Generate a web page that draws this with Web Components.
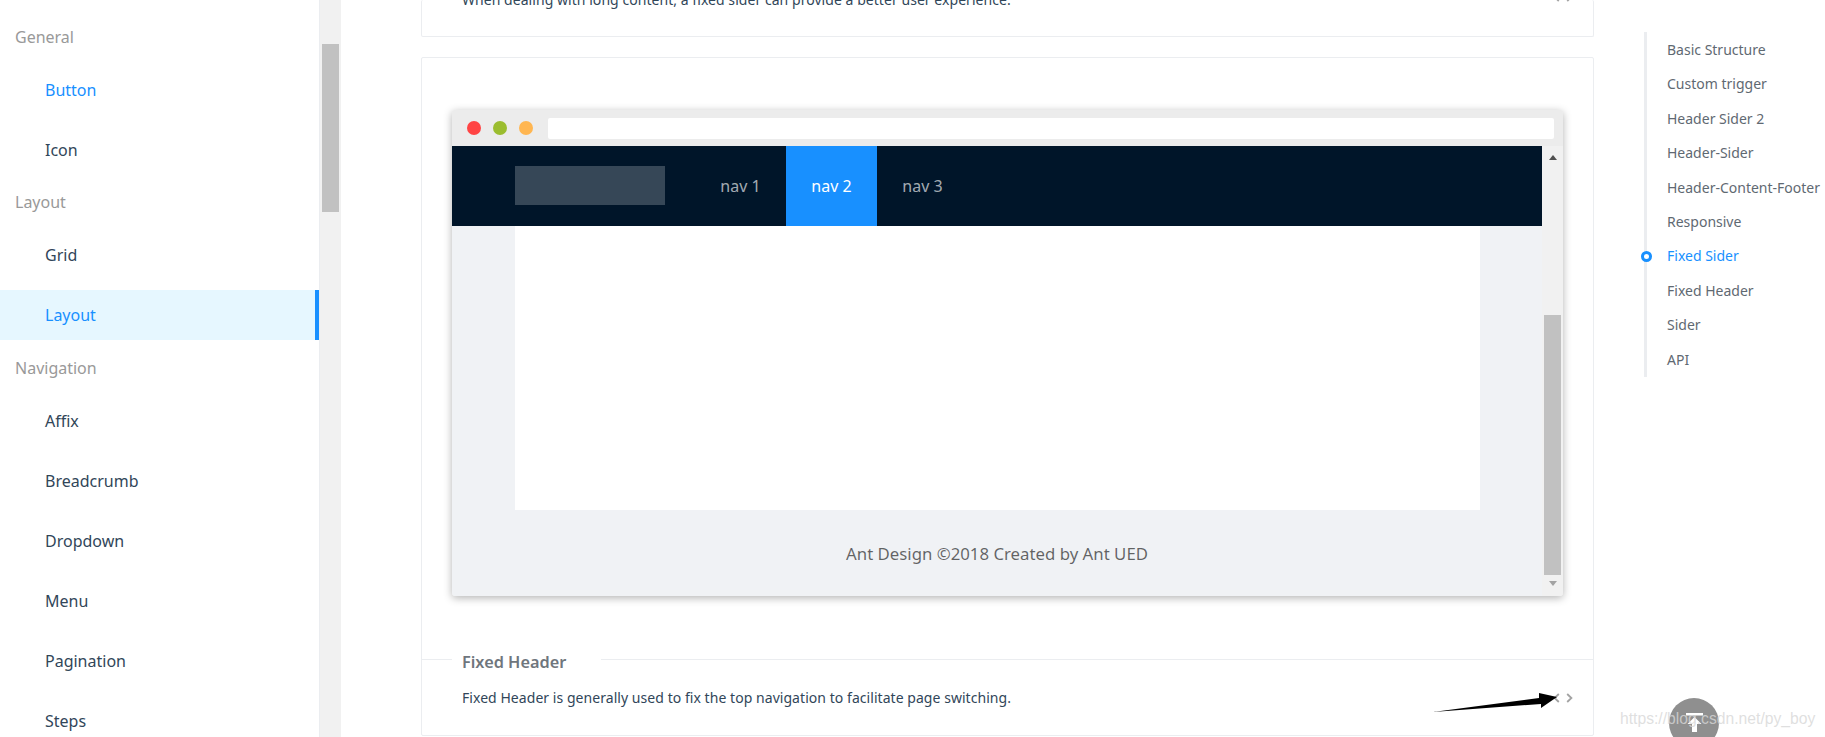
<!DOCTYPE html>
<html>
<head>
<meta charset="utf-8">
<title>Ant Design Layout</title>
<style>
html, body { margin: 0; height: 737px; overflow: hidden; background: #fff; }
body { font-family: "Noto Sans", "Liberation Sans", sans-serif; }
</style>
</head>
<body>
<app-page>
  <side-menu slot="sider">
    <menu-group title="General">
      <menu-item active-text>Button</menu-item>
      <menu-item>Icon</menu-item>
    </menu-group>
    <menu-group title="Layout">
      <menu-item>Grid</menu-item>
      <menu-item selected>Layout</menu-item>
    </menu-group>
    <menu-group title="Navigation" style="padding-top: 1px">
      <menu-item>Affix</menu-item>
      <menu-item>Breadcrumb</menu-item>
      <menu-item>Dropdown</menu-item>
      <menu-item>Menu</menu-item>
      <menu-item>Pagination</menu-item>
      <menu-item>Steps</menu-item>
    </menu-group>
  </side-menu>

  <demo-list slot="main">
    <demo-card clipped description="When dealing with long content, a fixed sider can provide a better user experience."></demo-card>
    <demo-card heading="Fixed Header" description="Fixed Header is generally used to fix the top navigation to facilitate page switching.">
      <browser-frame slot="preview">
        <demo-layout></demo-layout>
      </browser-frame>
    </demo-card>
  </demo-list>

  <anchor-nav slot="anchor">
    <anchor-link>Basic Structure</anchor-link>
    <anchor-link>Custom trigger</anchor-link>
    <anchor-link>Header Sider 2</anchor-link>
    <anchor-link>Header-Sider</anchor-link>
    <anchor-link>Header-Content-Footer</anchor-link>
    <anchor-link>Responsive</anchor-link>
    <anchor-link active>Fixed Sider</anchor-link>
    <anchor-link>Fixed Header</anchor-link>
    <anchor-link>Sider</anchor-link>
    <anchor-link>API</anchor-link>
  </anchor-nav>

  <page-overlays slot="overlay"></page-overlays>
</app-page>

<script>
class AppPage extends HTMLElement {
    constructor() {
        super();
        this.attachShadow({mode: 'open'}).innerHTML = `
        <style>
          :host { display: flex; width: 1825px; height: 737px; overflow: hidden; position: relative; }
        </style>
        <slot name="sider"></slot>
        <slot name="main"></slot>
        <slot name="anchor"></slot>
        <slot name="overlay"></slot>`;
    }
}

class SideMenu extends HTMLElement {
    constructor() {
        super();
        this.attachShadow({mode: 'open'}).innerHTML = `
        <style>
          :host { display: flex; flex: none; width: 341px; height: 737px; }
          .list { flex: none; width: 319px; padding-top: 20px; border-right: 1px solid #ebedf0; overflow: hidden; }
          .bar { flex: 1; background: #f1f1f1; padding-top: 44px; display: flex; justify-content: center; }
          .thumb { width: 17px; height: 168px; background: #c1c1c1; }
        </style>
        <div class="list"><slot></slot></div>
        <div class="bar"><div class="thumb"></div></div>`;
    }
}

class MenuGroup extends HTMLElement {
    constructor() {
        super();
        this.attachShadow({mode: 'open'}).innerHTML = `
        <style>
          :host { display: block; }
          .title { height: 35px; line-height: 35px; padding-left: 15px; font-size: 16px; color: #999; }
        </style>
        <div class="title"></div>
        <slot></slot>`;
    }
    connectedCallback() {
        this.shadowRoot.querySelector('.title').textContent = this.getAttribute('title');
    }
}

class MenuItem extends HTMLElement {
    constructor() {
        super();
        this.attachShadow({mode: 'open'}).innerHTML = `
        <style>
          :host { display: block; height: 50px; line-height: 50px; margin: 10px 0; padding-left: 45px; font-size: 16px; color: #314659; }
          :host([active-text]) { color: #1890ff; }
          :host([selected]) { color: #1890ff; background: #e6f7ff; box-shadow: inset -4px 0 0 #1890ff; }
        </style>
        <slot></slot>`;
    }
}

class DemoList extends HTMLElement {
    constructor() {
        super();
        this.attachShadow({mode: 'open'}).innerHTML = `
        <style>
          :host { display: flex; flex-direction: column; gap: 20px; flex: none; width: 1173px; margin-left: 80px; }
        </style>
        <slot></slot>`;
    }
}

class DemoCard extends HTMLElement {
    constructor() {
        super();
        this.attachShadow({mode: 'open'}).innerHTML = `
        <style>
          :host { display: block; box-sizing: border-box; border: 1px solid #ebedf0; border-radius: 2px; }
          :host([clipped]) { height: 37px; border-top: 0; overflow: hidden; }
          :host([clipped]) .preview, :host([clipped]) .heading { display: none; }
          :host([clipped]) .meta { border-top: 0; height: 36px; margin-top: -11px; }
          :host([clipped]) .row { padding-top: 0; }
          :host([clipped]) .icons { margin-top: -6px; }
          .preview { padding: 52px 30px 63px; }
          .meta { border-top: 1px solid #ebedf0; height: 76px; padding: 0 20px 0 40px; box-sizing: border-box; position: relative; }
          .heading { position: absolute; top: -10px; left: 30px; padding: 0 35px 0 10px; background: #fff; font-size: 16.300px; font-weight: 600; line-height: 24px; color: #6f767d; }
          .row { display: flex; justify-content: space-between; align-items: center; padding-top: 27px; }
          .desc { font-size: 14px; letter-spacing: .05px; line-height: 22px; color: #314659; }
          .icons { display: flex; gap: 6px; }
          svg { display: block; }
        </style>
        <div class="preview"><slot name="preview"></slot></div>
        <div class="meta">
          <div class="heading"></div>
          <div class="row">
            <div class="desc"></div>
            <div class="icons">
              <svg width="7" height="10" viewBox="0 0 7 10"><path d="M5.800 1 1.600 5l4.200 4" fill="none" stroke="#a3a3a3" stroke-width="1.800"/></svg>
              <svg width="7" height="10" viewBox="0 0 7 10"><path d="M1.200 1l4.200 4-4.200 4" fill="none" stroke="#a3a3a3" stroke-width="1.800"/></svg>
            </div>
          </div>
        </div>`;
    }
    connectedCallback() {
        this.shadowRoot.querySelector('.heading').textContent = this.getAttribute('heading') || '';
        this.shadowRoot.querySelector('.desc').textContent = this.getAttribute('description') || '';
    }
}

class BrowserFrame extends HTMLElement {
    constructor() {
        super();
        this.attachShadow({mode: 'open'}).innerHTML = `
        <style>
          :host { display: block; height: 486px; border-radius: 3px; box-shadow: 0 2px 8px rgba(0,0,0,.3); overflow: hidden; background: #f1f1f1; }
          .top { height: 36px; background: #ececec; display: flex; align-items: center; padding: 0 9px 0 15px; box-sizing: border-box; gap: 12px; }
          .dot { width: 14px; height: 14px; border-radius: 50%; }
          .url { flex: 1; height: 21px; margin-left: 3px; margin-top: 1px; background: #fff; border-radius: 2px; }
          .body { display: flex; height: 450px; }
          .view { flex: 1; min-width: 0; }
          .bar { flex: none; width: 21px; background: #f1f1f1; display: flex; flex-direction: column; align-items: center; }
          .up { margin-top: 9px; width: 0; height: 0; border: 4px solid transparent; border-top: 0; border-bottom: 5px solid #505050; }
          .thumb { margin-top: 155px; width: 17px; height: 260px; background: #c1c1c1; }
          .down { margin-top: 6px; width: 0; height: 0; border: 4px solid transparent; border-bottom: 0; border-top: 5px solid #a3a3a3; }
        </style>
        <div class="top">
          <span class="dot" style="background:#ff4444"></span>
          <span class="dot" style="background:#9bbd2f"></span>
          <span class="dot" style="background:#ffb651"></span>
          <div class="url"></div>
        </div>
        <div class="body">
          <div class="view"><slot></slot></div>
          <div class="bar"><span class="up"></span><span class="thumb"></span><span class="down"></span></div>
        </div>`;
    }
}

class DemoLayout extends HTMLElement {
    constructor() {
        super();
        this.attachShadow({mode: 'open'}).innerHTML = `
        <style>
          :host { display: flex; flex-direction: column; height: 450px; background: #f0f2f5; }
          header { flex: none; height: 80px; background: #001529; display: flex; align-items: stretch; padding-left: 63px; }
          .logo { flex: none; width: 150px; height: 39px; margin: 20px 30px 0 0; background: #364757; }
          .nav { width: 91px; line-height: 80px; text-align: center; font-size: 16px; color: rgba(255,255,255,.65); }
          .nav.on { background: #1890ff; color: #fff; }
          .content { flex: none; height: 284px; margin: 0 62px 0 63px; background: #fff; }
          footer { flex: 1; padding-top: 30px; text-align: center; font-size: 16.800px; line-height: 28px; color: rgba(0,0,0,.6); }
        </style>
        <header>
          <div class="logo"></div>
          <div class="nav">nav 1</div>
          <div class="nav on">nav 2</div>
          <div class="nav">nav 3</div>
        </header>
        <div class="content"></div>
        <footer>Ant Design ©2018 Created by Ant UED</footer>`;
    }
}

class AnchorNav extends HTMLElement {
    constructor() {
        super();
        this.attachShadow({mode: 'open'}).innerHTML = `
        <style>
          :host { display: block; flex: none; box-sizing: border-box; width: 181px; height: 345px; margin: 32px 0 0 50px; border-left: 3px solid #ebedf0; padding-left: 20px; }
        </style>
        <slot></slot>`;
    }
}

class AnchorLink extends HTMLElement {
    constructor() {
        super();
        this.attachShadow({mode: 'open'}).innerHTML = `
        <style>
          :host { display: block; position: relative; height: 34.400px; line-height: 36px; font-size: 14px; color: #5f6972; white-space: nowrap; }
          :host([active]) { color: #1890ff; }
          .ball { display: none; position: absolute; left: -26px; top: 13px; width: 5px; height: 5px; border: 3px solid #1890ff; border-radius: 50%; background: #fff; }
          :host([active]) .ball { display: block; }
        </style>
        <span class="ball"></span><slot></slot>`;
    }
}

class PageOverlays extends HTMLElement {
    constructor() {
        super();
        this.attachShadow({mode: 'open'}).innerHTML = `
        <style>
          :host { display: block; position: absolute; left: 0; top: 0; width: 0; height: 0; }
          .top-btn { position: absolute; left: 1669px; top: 698px; width: 50px; height: 50px; border-radius: 50%; background: #8f8f8f; }
          .top-btn svg { position: absolute; left: 17px; top: 15px; }
          .arrow { position: absolute; left: 1430px; top: 690px; }
          .mark { position: absolute; left: 1620px; top: 709px; font: 15.700px/20px "Liberation Sans", Arial, sans-serif; color: rgba(215,215,215,.8); white-space: nowrap; }
        </style>
        <div class="top-btn">
          <svg width="17" height="19" viewBox="0 0 17 19">
            <rect x="0" y="0" width="17" height="2.500" fill="#fff"/>
            <path d="M8.500 4 1.500 11H6v8h5v-8h4.500z" fill="#fff"/>
          </svg>
        </div>
        <svg class="arrow" width="130" height="24" viewBox="1430 690 130 24">
          <path d="M1433 712 1539 698 1539 693 1557 697 1541 708 1541 704z" fill="#000"/>
        </svg>
        <div class="mark">https://blog.csdn.net/py_boy</div>`;
    }
}

customElements.define('app-page', AppPage);
customElements.define('side-menu', SideMenu);
customElements.define('menu-group', MenuGroup);
customElements.define('menu-item', MenuItem);
customElements.define('demo-list', DemoList);
customElements.define('demo-card', DemoCard);
customElements.define('browser-frame', BrowserFrame);
customElements.define('demo-layout', DemoLayout);
customElements.define('anchor-nav', AnchorNav);
customElements.define('anchor-link', AnchorLink);
customElements.define('page-overlays', PageOverlays);
</script>
</body>
</html>
